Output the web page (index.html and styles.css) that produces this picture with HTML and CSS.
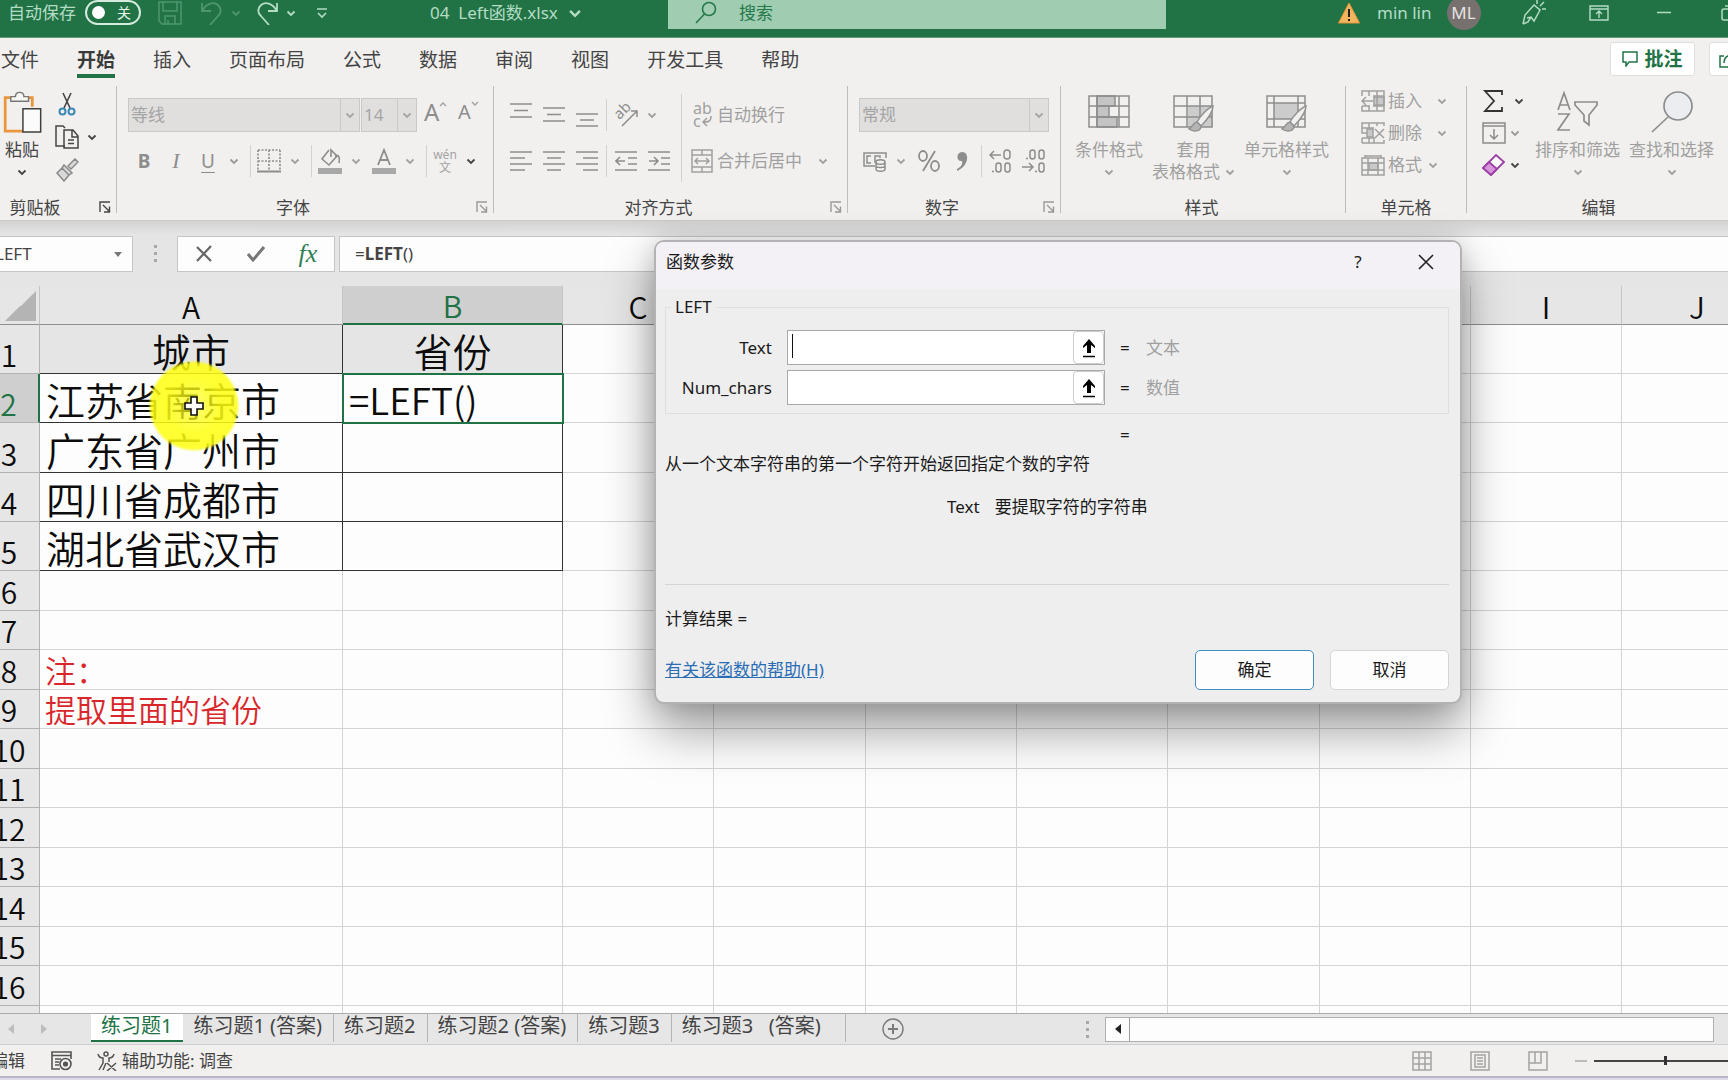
FILE: index.html
```html
<!DOCTYPE html>
<html lang="zh-CN">
<head>
<meta charset="utf-8">
<meta name="viewport" content="width=device-width, initial-scale=1">
<title>04 Left函数.xlsx</title>
<link rel="stylesheet" href="styles.css">
</head>
<body>
<svg class="defs" aria-hidden="true">
  <symbol id="chev" viewBox="0 0 10 10"><path d="M1.5 3.5 5 7l3.5-3.5" fill="none" stroke="currentColor" stroke-width="1.8"/></symbol>
  <symbol id="launch" viewBox="0 0 12 12"><path d="M1 11V1h10M4 4l6 6M10.500 5.500v5.500H5" fill="none" stroke="currentColor" stroke-width="1.400"/></symbol>
  <symbol id="brush" viewBox="0 0 26 28"><path d="M25 1C20 3 12 11 9 17l4 4C18 16 25 7 25 1z" fill="#f1f0ee" stroke="#929292" stroke-width="1.500"/><path d="M9 17c-4 0-4 5-8 7 4 3 12 3 12-3z" fill="#b5b5b5" stroke="#929292" stroke-width="1.500"/></symbol>
</svg>
<div class="app">

  <header class="titlebar">
    <div class="title-left">
      <label class="autosave" for="autosave">自动保存</label>
      <span class="toggle"><input type="checkbox" id="autosave"><span>关</span></span>
      <button class="tb dim" aria-label="保存"><svg width="24" height="24" viewBox="0 0 24 24" fill="none" stroke="currentColor" stroke-width="1.500"><path d="M1 1h22v22H4l-3-3zM5 1v9h14V1M7 23v-8h10v8M10 23v-4"/></svg></button>
      <button class="tb dim" aria-label="撤消"><svg width="24" height="24" viewBox="0 0 24 24" fill="none" stroke="currentColor" stroke-width="1.800"><path d="M2 2v8h9M2 10C6 3 13 0 18 4c4 4 3 8 0 11l-8 9"/></svg></button>
      <button class="tb-chev dim" aria-label="撤消选项"><svg width="10" height="10"><use href="#chev"/></svg></button>
      <button class="tb" aria-label="恢复"><svg width="24" height="24" viewBox="0 0 24 24" fill="none" stroke="currentColor" stroke-width="1.800"><path d="M22 2v8h-9M22 10C18 3 11 0 6 4c-4 4-3 8 0 11l8 9"/></svg></button>
      <button class="tb-chev" aria-label="恢复选项"><svg width="10" height="10"><use href="#chev"/></svg></button>
      <button class="tb" aria-label="自定义快速访问工具栏"><svg width="12" height="12" viewBox="0 0 12 12" fill="none" stroke="currentColor" stroke-width="1.600"><path d="M1 2h10M2 6l4 4 4-4"/></svg></button>
      <h1 class="doc">04&nbsp; Left函数.xlsx</h1>
      <svg class="doc-chev" width="14" height="14"><use href="#chev"/></svg>
    </div>
    <div class="search">
      <svg width="22" height="24" viewBox="0 0 22 24" fill="none" stroke="#257a4b" stroke-width="1.600"><circle cx="14" cy="8" r="6.500"/><path d="M9.500 13 1 22"/></svg>
      <input type="search" placeholder="搜索" aria-label="搜索">
    </div>
    <div class="title-right">
      <svg width="22" height="22" viewBox="0 0 22 22"><path d="M11 1 21.500 21H.5z" fill="#f2b45c" stroke="#e8963a"/><path d="M11 7v8M11 17v2" stroke="#222" stroke-width="2"/></svg>
      <span class="user">min lin</span>
      <span class="avatar">ML</span>
      <button class="tb" aria-label="即将推出"><svg width="24" height="26" viewBox="0 0 24 26" fill="none" stroke="currentColor" stroke-width="1.500"><path d="M1 24 3 15 12 5l6 5-6 11-3-4-4 1M1 24l5-2 3-5M15 4V0M18 6l4-4M20 9h4"/></svg></button>
      <button class="tb" aria-label="功能区显示选项"><svg width="20" height="16" viewBox="0 0 20 16" fill="none" stroke="currentColor" stroke-width="1.400"><path d="M1 1h18v14H1zM1 4h18M10 13V6M7 9l3-3 3 3"/></svg></button>
      <button class="tb" aria-label="最小化"><svg width="14" height="14" viewBox="0 0 14 14"><path d="M0 6.500h14" stroke="currentColor" stroke-width="1.500"/></svg></button>
      <button class="tb" aria-label="还原"><svg width="16" height="16" viewBox="0 0 16 16" fill="none" stroke="currentColor" stroke-width="1.500"><rect x="1" y="4" width="11" height="11" rx="2"/><path d="M4 1h8a3 3 0 0 1 3 3v8"/></svg></button>
    </div>
  </header>

  <nav class="tabs">
    <div class="tablist">
      <button>文件</button><button class="on">开始</button><button>插入</button><button>页面布局</button><button>公式</button><button>数据</button><button>审阅</button><button>视图</button><button>开发工具</button><button>帮助</button>
    </div>
    <div class="tab-actions">
      <button class="pill"><svg width="16" height="16" viewBox="0 0 16 16" fill="none" stroke="currentColor" stroke-width="1.500"><path d="M1 1h14v10H7l-3 4v-4H1z"/></svg>批注</button>
      <button class="pill share" aria-label="共享"><svg width="18" height="18" viewBox="0 0 18 18" fill="none" stroke="currentColor" stroke-width="1.500"><path d="M5 6H1v11h14v-5M5 13c0-5 3-8 9-8M11 1l5 4-5 4"/></svg></button>
    </div>
  </nav>

  <section class="ribbon">
    <div class="group g-clip">
      <div class="body">
        <button class="big paste">
          <svg width="42" height="45" viewBox="0 0 42 45" fill="none"><path d="M9 7H3v36h19M27 7h5v10" stroke="#e9963c" stroke-width="3"/><path d="M9 11V6h5c0-6 9-6 9 0h5v5z" fill="#f7f7f6" stroke="#777" stroke-width="1.500"/><path d="M22 19h19v25H22z" fill="#fbfbfb" stroke="#3f3f3f" stroke-width="1.600"/></svg>
          <span>粘贴</span><svg class="c" width="10" height="10"><use href="#chev"/></svg>
        </button>
        <div class="stack3">
          <button aria-label="剪切"><svg width="24" height="24" viewBox="0 0 24 24" fill="none"><path d="M8 1l7 15M16 1 9 16" stroke="#444" stroke-width="1.600"/><circle cx="7.500" cy="19.500" r="3" stroke="#3b87b8" stroke-width="2"/><circle cx="16.500" cy="19.500" r="3" stroke="#3b87b8" stroke-width="2"/></svg></button>
          <button aria-label="复制"><svg width="24" height="24" viewBox="0 0 24 24" fill="none" stroke="#444" stroke-width="1.500"><path d="M10 21H1V1h7l2 2"/><path d="M9 5h9l5 6v12H9zM17 5v7h6M13 15h6M13 18.500h6"/></svg><svg class="c" width="10" height="10"><use href="#chev"/></svg></button>
          <button aria-label="格式刷"><svg width="24" height="24" viewBox="0 0 24 24" fill="#d9d9d9" stroke="#8a8a8a" stroke-width="1.500"><path d="M13 8l7-7 3 3-7 7zM9 7l8 8-3 2-7-7zM7 10l7 7-5 6-7-8z"/></svg></button>
        </div>
      </div>
      <footer>剪贴板<button class="launch" aria-label="剪贴板设置"><svg width="12" height="12"><use href="#launch"/></svg></button></footer>
    </div>

    <div class="group g-font">
      <div class="body rows">
        <div class="row">
          <div class="combo wide"><select disabled aria-label="字体"><option>等线</option></select><svg width="10" height="10"><use href="#chev"/></svg></div>
          <div class="combo size"><select disabled aria-label="字号"><option>14</option></select><svg width="10" height="10"><use href="#chev"/></svg></div>
          <button class="grow" disabled aria-label="增大字号"><b class="a-big">A</b><svg width="8" height="8" viewBox="0 0 8 8"><path d="m1 6 3-3 3 3" fill="none" stroke="currentColor" stroke-width="1.400"/></svg></button>
          <button class="grow" disabled aria-label="减小字号"><b class="a-small">A</b><svg width="8" height="8" viewBox="0 0 8 8"><path d="m1 2 3 3 3-3" fill="none" stroke="currentColor" stroke-width="1.400"/></svg></button>
        </div>
        <div class="row">
          <button class="ltr bold" disabled>B</button><button class="ltr ital" disabled>I</button><button class="ltr under" disabled>U</button><svg class="cv off" width="10" height="10"><use href="#chev"/></svg>
          <i class="sep"></i>
          <button class="split" disabled aria-label="边框"><svg width="24" height="24" viewBox="0 0 24 24" fill="none" stroke="currentColor" stroke-width="1.600"><path d="M1 1h22M1 12h22M1 1v21M12 1v21M23 1v21" stroke-dasharray="2 1.500"/><path d="M0 22.500h24" stroke-width="2"/></svg><svg class="cv" width="10" height="10"><use href="#chev"/></svg></button>
          <i class="sep"></i>
          <button class="split" disabled aria-label="填充颜色"><svg width="24" height="26" viewBox="0 0 24 26" fill="none" stroke="#8d8d8d" stroke-width="1.600"><path d="M11 2 4 11l7 6 8-9-6-6v7M17 8c4-2 5 2 4 7"/><path d="M0 23h24" stroke="#a8a8a8" stroke-width="6"/></svg><svg class="cv" width="10" height="10"><use href="#chev"/></svg></button>
          <button class="split fontcolor" disabled aria-label="字体颜色"><svg width="24" height="26" viewBox="0 0 24 26" fill="none" stroke="#8d8d8d" stroke-width="1.800"><path d="m6 17 6-15 6 15M8.500 12h7"/><path d="M0 23h24" stroke="#a8a8a8" stroke-width="6"/></svg><svg class="cv" width="10" height="10"><use href="#chev"/></svg></button>
          <i class="sep"></i>
          <button class="split" aria-label="拼音"><span class="wen"><span>wén</span><span>文</span></span><svg class="cv" width="10" height="10"><use href="#chev"/></svg></button>
        </div>
      </div>
      <footer>字体<button class="launch off" aria-label="字体设置"><svg width="12" height="12"><use href="#launch"/></svg></button></footer>
    </div>

    <div class="group g-align">
      <div class="body">
        <div class="rows">
          <div class="row">
            <div class="trio">
              <button disabled aria-label="顶端对齐"><svg width="22" height="24" viewBox="0 0 22 24"><path d="M0 1h22M4 7.500h14M0 14h22" stroke="currentColor" stroke-width="1.600"/></svg></button>
              <button disabled aria-label="垂直居中"><svg width="22" height="24" viewBox="0 0 22 24"><path d="M0 5h22M4 11.500h14M0 18h22" stroke="currentColor" stroke-width="1.600"/></svg></button>
              <button disabled aria-label="底端对齐"><svg width="22" height="24" viewBox="0 0 22 24"><path d="M0 11h22M4 17h14M0 23h22" stroke="currentColor" stroke-width="1.600"/></svg></button>
            </div>
            <i class="sep"></i>
            <button class="split" disabled aria-label="方向"><svg width="24" height="24" viewBox="0 0 24 24" fill="none" stroke="currentColor" stroke-width="1.500"><path d="M7 23 22 8M16 8h6v6"/><text x="-1" y="12" transform="rotate(-45 8 8)" font-size="15" font-family="Noto Sans" fill="currentColor" stroke="none">ab</text></svg><svg class="cv" width="10" height="10"><use href="#chev"/></svg></button>
          </div>
          <div class="row">
            <div class="trio">
              <button disabled aria-label="左对齐"><svg width="22" height="22" viewBox="0 0 22 22"><path d="M0 2h22M0 8h15M0 14h22M0 20h15" stroke="currentColor" stroke-width="1.600"/></svg></button>
              <button disabled aria-label="居中"><svg width="22" height="22" viewBox="0 0 22 22"><path d="M0 2h22M4 8h14M0 14h22M4 20h14" stroke="currentColor" stroke-width="1.600"/></svg></button>
              <button disabled aria-label="右对齐"><svg width="22" height="22" viewBox="0 0 22 22"><path d="M0 2h22M7 8h15M0 14h22M7 20h15" stroke="currentColor" stroke-width="1.600"/></svg></button>
            </div>
            <i class="sep"></i>
            <div class="trio">
              <button disabled aria-label="减少缩进"><svg width="22" height="22" viewBox="0 0 22 22" fill="none" stroke="currentColor" stroke-width="1.600"><path d="M0 2h22M13 8h9M13 14h9M0 20h22M1 11h9M5 7l-4 4 4 4"/></svg></button>
              <button disabled aria-label="增加缩进"><svg width="22" height="22" viewBox="0 0 22 22" fill="none" stroke="currentColor" stroke-width="1.600"><path d="M0 2h22M13 8h9M13 14h9M0 20h22M1 11h9M6 7l4 4-4 4"/></svg></button>
            </div>
          </div>
        </div>
        <div class="rows wraps">
          <div class="row"><button class="txt" disabled><svg width="22" height="26" viewBox="0 0 22 26" fill="none" stroke="currentColor" stroke-width="1.500"><text x="2" y="12" font-size="16" font-family="Noto Sans" fill="currentColor" stroke="none">ab</text><text x="2" y="25" font-size="16" font-family="Noto Sans" fill="currentColor" stroke="none">c</text><path d="M20 14c0 6-3 6-8 6M16 16l-4 4 4 4"/></svg>自动换行</button></div>
          <div class="row"><button class="txt" disabled><svg width="22" height="24" viewBox="0 0 22 24" fill="none" stroke="currentColor" stroke-width="1.500"><path d="M1 1h20v22H1zM1 6h20M1 18h20M11 1v5M11 18v5M4 12h14M7 9l-3 3 3 3M15 9l3 3-3 3"/></svg>合并后居中<svg class="cv" width="10" height="10"><use href="#chev"/></svg></button></div>
        </div>
      </div>
      <footer>对齐方式<button class="launch off" aria-label="对齐设置"><svg width="12" height="12"><use href="#launch"/></svg></button></footer>
    </div>

    <div class="group g-num">
      <div class="body rows">
        <div class="row"><div class="combo num"><select disabled aria-label="数字格式"><option>常规</option></select><svg width="10" height="10"><use href="#chev"/></svg></div></div>
        <div class="row">
          <button class="split cur" disabled aria-label="会计数字格式"><svg width="24" height="24" viewBox="0 0 24 24" fill="none" stroke="currentColor" stroke-width="1.500"><path d="M12 17H1V4h22v5M8 7H4v7h4M12 14V7h5v2"/><path d="M13 13v7c0 3 9 3 9 0v-7M13 13c0 3 9 3 9 0s-9-3-9 0M13 17c0 2 9 2 9 0"/></svg><svg class="cv" width="10" height="10"><use href="#chev"/></svg></button>
          <div class="pair">
            <button disabled aria-label="百分比"><svg width="24" height="24" viewBox="0 0 24 24" fill="none" stroke="currentColor" stroke-width="1.800"><ellipse cx="6" cy="7" rx="4" ry="5"/><ellipse cx="18" cy="17" rx="4" ry="5"/><path d="M18 2 6 22"/></svg></button>
            <button disabled aria-label="千位分隔"><svg width="24" height="24" viewBox="0 0 24 24"><path d="M7 20c4-2 6-5 5-8-6 1-6-9 0-9 8 0 7 14-5 19z" fill="currentColor"/></svg></button>
          </div>
          <i class="sep"></i>
          <div class="pair">
            <button disabled aria-label="增加小数位"><svg width="24" height="24" viewBox="0 0 24 24" fill="none" stroke="currentColor" stroke-width="1.500"><path d="M1 6h11M5 2 1 6l4 4"/><rect x="15" y="1" width="6" height="9" rx="3"/><rect x="7" y="14" width="5" height="9" rx="2.500"/><rect x="16" y="14" width="5" height="9" rx="2.500"/><path d="M3 22.500h2"/></svg></button>
            <button disabled aria-label="减少小数位"><svg width="24" height="24" viewBox="0 0 24 24" fill="none" stroke="currentColor" stroke-width="1.500"><path d="M0 18h11M7 14l4 4-4 4M13 22.500h2"/><rect x="17" y="14" width="5" height="9" rx="2.500"/><rect x="8" y="1" width="5" height="9" rx="2.500"/><rect x="17" y="1" width="5" height="9" rx="2.500"/><path d="M4 9.500h2"/></svg></button>
          </div>
        </div>
      </div>
      <footer>数字<button class="launch off" aria-label="数字设置"><svg width="12" height="12"><use href="#launch"/></svg></button></footer>
    </div>

    <div class="group g-style">
      <div class="body">
        <button class="big" disabled><svg width="42" height="42" viewBox="0 0 42 42" fill="none" stroke="currentColor" stroke-width="1.500"><path d="M9 5h18v10H9zM9 15h12v11H9zM9 26h20v10H9z" fill="#c4c4c4"/><path d="M1 5h40v31H1zM1 15h40M1 26h40M9 5v31M31 5v31"/></svg><span>条件格式</span><svg class="c" width="10" height="10"><use href="#chev"/></svg></button>
        <button class="big" disabled><svg width="42" height="42" viewBox="0 0 42 42" fill="none" stroke="currentColor" stroke-width="1.500"><path d="M15 15h25v21H15z" fill="#ccc" stroke="none"/><path d="M1 5h38v31H1zM1 15h38M1 26h38M14 5v31M27 5v31"/><use href="#brush" x="14" y="14" width="28" height="28"/></svg><span>套用</span><span class="two">表格格式<svg width="10" height="10"><use href="#chev"/></svg></span></button>
        <button class="big" disabled><svg width="42" height="42" viewBox="0 0 42 42" fill="none" stroke="currentColor" stroke-width="1.500"><path d="M8 12h24v16H8z" fill="#ccc" stroke="none"/><path d="M1 5h38v31H1zM1 12h38M1 28h38M8 5v31M32 5v31"/><use href="#brush" x="14" y="14" width="28" height="28"/></svg><span>单元格样式</span><svg class="c" width="10" height="10"><use href="#chev"/></svg></button>
      </div>
      <footer>样式</footer>
    </div>

    <div class="group g-cell">
      <div class="body stack3">
        <button disabled><svg width="24" height="22" viewBox="0 0 24 22" fill="none" stroke="currentColor" stroke-width="1.500"><path d="M13 7h10v8H13z" fill="#c8c8c8"/><path d="M1 6V1h22v20H1v-5M8 1v5M16 1v20M8 16v5M1 11h11M5 7l-4 4 4 4M12 6h11M12 16h11M1 16h8"/></svg>插入<svg class="c" width="10" height="10"><use href="#chev"/></svg></button>
        <button disabled><svg width="24" height="22" viewBox="0 0 24 22" fill="none" stroke="currentColor" stroke-width="1.500"><path d="M6 7h6v8H6z" fill="#c8c8c8"/><path d="M23 4V1H1v5h12M1 6v5h5M1 16h12v5M1 21v-5M1 21h22v-3M8 1v5M16 1v3M8 16v5M14 7l9 9M23 7l-9 9"/></svg>删除<svg class="c" width="10" height="10"><use href="#chev"/></svg></button>
        <button class="near" disabled><svg width="24" height="22" viewBox="0 0 24 22" fill="none" stroke="currentColor" stroke-width="1.500"><path d="M8 9h9v7H8z" fill="#c8c8c8"/><path d="M1 4h22v17H1zM1 9h22M1 16h22M7 4v17M17 4v17M4 1v3M20 1v3M4 2h16" /></svg>格式<svg class="c" width="10" height="10"><use href="#chev"/></svg></button>
      </div>
      <footer>单元格</footer>
    </div>

    <div class="group g-edit">
      <div class="body">
        <div class="stack3">
          <button class="sum" aria-label="自动求和"><svg width="24" height="22" viewBox="0 0 24 22" fill="none" stroke="#333" stroke-width="1.800"><path d="M20 5V1H3l9 10-9 10h17v-4"/></svg><svg class="c" width="10" height="10"><use href="#chev"/></svg></button>
          <button aria-label="填充"><svg width="24" height="22" viewBox="0 0 24 22" fill="none" stroke="#8a8a8a" stroke-width="1.500"><path d="M1 1h22v20H1zM1 4h22M12 7v10M8 13l4 4 4-4"/></svg><svg class="c off" width="10" height="10"><use href="#chev"/></svg></button>
          <button aria-label="清除"><svg width="24" height="22" viewBox="0 0 24 22" fill="#fafafa" stroke="#9b3fa5" stroke-width="1.800"><path d="M14 1l8 7L9 21l-8-7z"/><path d="M7 8l8 7-6 6-8-7z" fill="#d795dc"/></svg><svg class="c" width="10" height="10"><use href="#chev"/></svg></button>
        </div>
        <button class="big" disabled><svg width="44" height="42" viewBox="0 0 44 42" fill="none" stroke="currentColor" stroke-width="1.700"><path d="M2 19 8 2l6 17M4 14h8M2 23h11L2 39h12M19 11h22v3l-8 10v10l-5-4v-6l-9-10z"/></svg><span>排序和筛选</span><svg class="c" width="10" height="10"><use href="#chev"/></svg></button>
        <button class="big" disabled><svg width="44" height="42" viewBox="0 0 44 42" fill="#ecedf0" stroke="currentColor" stroke-width="1.700"><circle cx="28" cy="15" r="14"/><path d="M18 26 2 41"/></svg><span>查找和选择</span><svg class="c" width="10" height="10"><use href="#chev"/></svg></button>
      </div>
      <footer>编辑</footer>
    </div>
  </section>

  <section class="formula">
    <div class="namebox"><input type="text" value="LEFT" aria-label="名称框"><span class="tri"></span></div>
    <span class="dots"><i></i><i></i><i></i></span>
    <div class="fbuttons">
      <button aria-label="取消输入"><svg width="18" height="18" viewBox="0 0 18 18"><path d="M2 2l14 14M16 1 2 16" stroke="#666" stroke-width="2.200"/></svg></button>
      <button aria-label="确认输入"><svg width="18" height="18" viewBox="0 0 18 18"><path d="m1 9 5 6L17 2" fill="none" stroke="#777" stroke-width="3"/></svg></button>
      <button class="fx" aria-label="插入函数">fx</button>
    </div>
    <div class="finput" role="textbox" contenteditable="true" aria-label="编辑栏">=<b>LEFT</b>()</div>
  </section>

  <main class="sheet">
    <table class="grid">
      <colgroup><col class="cr"><col class="ca"><col class="cb"><col class="c1"><col class="c2"><col class="c1"><col class="c1"><col class="c2"><col class="c1"><col class="c1"><col class="c1"></colgroup>
      <thead><tr><th><span class="corner"></span></th><th>A</th><th class="sel">B</th><th>C</th><th>D</th><th>E</th><th>F</th><th>G</th><th>H</th><th>I</th><th>J</th></tr></thead>
      <tbody>
        <tr class="data"><th>1</th><td class="head">城市</td><td class="head">省份</td><td></td><td></td><td></td><td></td><td></td><td></td><td></td><td></td></tr>
        <tr class="data active"><th>2</th><td>江苏省南京市</td><td><span class="edit">=LEFT()</span></td><td></td><td></td><td></td><td></td><td></td><td></td><td></td><td></td></tr>
        <tr class="data"><th>3</th><td>广东省广州市</td><td></td><td></td><td></td><td></td><td></td><td></td><td></td><td></td><td></td></tr>
        <tr class="data"><th>4</th><td>四川省成都市</td><td></td><td></td><td></td><td></td><td></td><td></td><td></td><td></td><td></td></tr>
        <tr class="data"><th>5</th><td>湖北省武汉市</td><td></td><td></td><td></td><td></td><td></td><td></td><td></td><td></td><td></td></tr>
        <tr><th>6</th><td></td><td></td><td></td><td></td><td></td><td></td><td></td><td></td><td></td><td></td></tr>
        <tr><th>7</th><td></td><td></td><td></td><td></td><td></td><td></td><td></td><td></td><td></td><td></td></tr>
        <tr><th>8</th><td class="note">注：</td><td></td><td></td><td></td><td></td><td></td><td></td><td></td><td></td><td></td></tr>
        <tr><th>9</th><td class="note">提取里面的省份</td><td></td><td></td><td></td><td></td><td></td><td></td><td></td><td></td><td></td></tr>
        <tr><th>10</th><td></td><td></td><td></td><td></td><td></td><td></td><td></td><td></td><td></td><td></td></tr>
        <tr><th>11</th><td></td><td></td><td></td><td></td><td></td><td></td><td></td><td></td><td></td><td></td></tr>
        <tr><th>12</th><td></td><td></td><td></td><td></td><td></td><td></td><td></td><td></td><td></td><td></td></tr>
        <tr><th>13</th><td></td><td></td><td></td><td></td><td></td><td></td><td></td><td></td><td></td><td></td></tr>
        <tr><th>14</th><td></td><td></td><td></td><td></td><td></td><td></td><td></td><td></td><td></td><td></td></tr>
        <tr><th>15</th><td></td><td></td><td></td><td></td><td></td><td></td><td></td><td></td><td></td><td></td></tr>
        <tr><th>16</th><td></td><td></td><td></td><td></td><td></td><td></td><td></td><td></td><td></td><td></td></tr>
        <tr><th></th><td></td><td></td><td></td><td></td><td></td><td></td><td></td><td></td><td></td><td></td></tr>
      </tbody>
    </table>
  </main>

  <div class="sheetbar">
    <div class="sheetnav"><button aria-label="上一张"><span class="arr l"></span></button><button aria-label="下一张"><span class="arr r"></span></button></div>
    <div class="sheettabs">
      <button class="on">练习题1</button><button>练习题1 (答案)</button><button>练习题2</button><button>练习题2 (答案)</button><button>练习题3</button><button class="last">练习题3&nbsp;&nbsp; (答案)</button>
    </div>
    <button class="add" aria-label="新工作表"><svg width="22" height="22" viewBox="0 0 22 22" fill="none" stroke="#7a7a7a" stroke-width="1.400"><circle cx="11" cy="11" r="10"/><path d="M11 6v10M6 11h10" stroke-width="2"/></svg></button>
    <span class="dots"><i></i><i></i><i></i></span>
    <div class="hscroll"><button aria-label="向左滚动"><span class="arr l dark"></span></button></div>
  </div>

  <footer class="status">
    <span class="mode">编辑</span>
    <button class="rec" aria-label="录制宏"><svg width="22" height="20" viewBox="0 0 22 20" fill="none" stroke="#555" stroke-width="1.600"><path d="M9 18H1V1h19v7M1 4.500h19M4 8h6M4 11h4M4 14h4"/><circle cx="14.500" cy="13" r="5.500"/><circle cx="14.500" cy="13" r="1.800" fill="#555"/></svg></button>
    <button class="acc"><svg width="20" height="20" viewBox="0 0 20 20" fill="none" stroke="#555" stroke-width="1.500"><circle cx="9" cy="3" r="2"/><path d="M1 3c1 4 5 4 5 4v5l-4 7M17 3c-1 4-5 4-5 4v4M9 12l-3 7M10 12l9 8M19 12l-9 8"/></svg>辅助功能: 调查</button>
    <div class="views">
      <button aria-label="普通"><svg width="20" height="20" viewBox="0 0 20 20" fill="none" stroke="currentColor" stroke-width="1.500"><path d="M1 1h18v18H1zM1 7h18M1 13h18M7 1v18M13 1v18"/></svg></button>
      <button aria-label="页面布局"><svg width="20" height="20" viewBox="0 0 20 20" fill="none" stroke="currentColor" stroke-width="1.500"><path d="M1 1h18v18H1zM5 4h10v12H5zM7 7h6M7 10h6M7 13h6"/></svg></button>
      <button aria-label="分页预览"><svg width="20" height="20" viewBox="0 0 20 20" fill="none" stroke="currentColor" stroke-width="1.500"><path d="M1 1h18v18H1zM1 12h12V1M7 1v11"/></svg></button>
    </div>
    <button class="minus" aria-label="缩小"></button>
    <input class="zoom" type="range" min="0" max="100" value="50" aria-label="缩放">
  </footer>
  <div class="edge"></div>

  <div class="pointer" aria-hidden="true"><svg width="20" height="20" viewBox="0 0 20 20"><path d="M7 1h6v6h6v6h-6v6H7v-6H1V7h6z" fill="#fff" stroke="#111" stroke-width="1.600"/></svg></div>

  <form class="dialog" role="dialog" aria-labelledby="dlg">
    <div class="dlg-title"><h2 id="dlg">函数参数</h2><button type="button">?</button><button type="button" aria-label="关闭"><svg width="16" height="16" viewBox="0 0 16 16"><path d="M1 1l14 14M15 1 1 15" stroke="#222" stroke-width="1.600"/></svg></button></div>
    <div class="dlg-body">
      <fieldset>
        <legend>LEFT</legend>
        <div class="arg"><label for="a1">Text</label><div class="field"><i class="caret"></i><input id="a1" type="text"><button type="button" aria-label="折叠"><svg width="14" height="20" viewBox="0 0 14 20"><path d="M7 1 13 8v2L9 7v8H5V7l-4 3V8z" fill="#000"/><path d="M1 18.500h12" stroke="#000" stroke-width="1.500"/></svg></button></div><span>=</span><output>文本</output></div>
        <div class="arg"><label for="a2">Num_chars</label><div class="field"><input id="a2" type="text"><button type="button" aria-label="折叠"><svg width="14" height="20" viewBox="0 0 14 20"><path d="M7 1 13 8v2L9 7v8H5V7l-4 3V8z" fill="#000"/><path d="M1 18.500h12" stroke="#000" stroke-width="1.500"/></svg></button></div><span>=</span><output>数值</output></div>
      </fieldset>
      <div class="arg result"><span></span><span></span><span>=</span></div>
      <p class="desc">从一个文本字符串的第一个字符开始返回指定个数的字符</p>
      <p class="argdesc"><span>Text</span><span>要提取字符的字符串</span></p>
      <p class="calc">计算结果 =</p>
      <div class="dlg-foot"><a href="#help">有关该函数的帮助(H)</a><button type="submit" class="ok">确定</button><button type="button">取消</button></div>
    </div>
  </form>
</div>
</body>
</html>
```

FILE: styles.css
```css
* { box-sizing: border-box; }
html, body { margin: 0; height: 100%; }
body {
  font: 17px/20px "Noto Sans", "Noto Sans CJK SC", sans-serif;
  color: #444;
  overflow: hidden;
}
button, input, select, output { font: inherit; color: inherit; }
button { padding: 0; border: 0; background: none; display: flex; align-items: center; white-space: nowrap; }
input { min-width: 0; border: 0; background: none; outline: 0; }
h1, h2, p { margin: 0; font-size: inherit; font-weight: 400; }
svg { display: block; flex: none; }
.defs { position: absolute; width: 0; height: 0; }

.app {
  position: relative;
  display: flex;
  flex-direction: column;
  height: 100vh;
  overflow: hidden;
  background: #e5e5e5;
}

/* title bar */
.titlebar {
  flex: none;
  display: flex;
  height: 38px;
  padding-bottom: 12px;
  align-items: center;
  background: #217346;
  border-bottom: 1px solid #5f9d79;
  color: #b3dcc3;
  overflow: hidden;
}
.title-left { flex: none; display: flex; align-items: center; width: 668px; padding-left: 8px; }
.autosave { width: 77px; white-space: nowrap; }
.toggle {
  display: flex;
  align-items: center;
  justify-content: space-between;
  width: 56px;
  height: 25px;
  margin-right: 17px;
  padding: 0 8px 0 5px;
  border: 2px solid #d5ebdd;
  border-radius: 13px;
  font-size: 14px;
  color: #e6f5ec;
}
.toggle input { appearance: none; width: 13px; height: 13px; margin: 0; border-radius: 50%; background: #fff; }
.tb { flex: none; justify-content: center; width: 24px; }
.tb-chev { justify-content: center; width: 20px; margin: 0 9px 0 2px; }
.dim { color: #4f966f; }
.dim + .dim { margin-left: 18px; }
.dim + .tb-chev.dim { margin-left: 2px; }
.doc { margin-left: 96px; width: 136px; white-space: nowrap; }
.doc-chev { margin-left: 2px; }
.search {
  flex: 1;
  display: flex;
  align-items: center;
  gap: 22px;
  height: 32px;
  padding-left: 27px;
  background: #a0ccb2;
}
.search input { flex: 1; padding: 0; }
.search input::placeholder { color: #257a4b; opacity: 1; }
.title-right { flex: none; display: flex; align-items: center; width: 562px; padding-left: 172px; }
.user { margin: 0 15px 0 17px; white-space: nowrap; }
.avatar {
  flex: none;
  width: 34px;
  height: 34px;
  border-radius: 50%;
  background: #76706f;
  color: #e6e2e2;
  line-height: 34px;
  text-align: center;
}
.title-right .tb { margin-left: 41px; }

/* ribbon tabs */
.tabs { flex: none; display: flex; height: 44px; justify-content: space-between; background: #f1f0ee; overflow: hidden; }
.tablist { display: flex; gap: 38px; padding-left: 1px; font-size: 19px; }
.tablist button { align-items: flex-start; height: 40px; padding-top: 12px; line-height: 20px; border-bottom: 4px solid transparent; }
.tablist .on { font-weight: 700; border-color: #217346; color: #3a3a3a; }
.tab-actions { flex: none; display: flex; gap: 14px; width: 118px; padding-top: 4px; }
.pill {
  flex: none;
  gap: 6px;
  justify-content: center;
  width: 85px;
  height: 34px;
  border: 1px solid #e1dfdd;
  border-radius: 3px;
  background: #fff;
  color: #217346;
  font-size: 19px;
  font-weight: 700;
}
.share { justify-content: flex-start; padding-left: 9px; }

/* ribbon */
.ribbon {
  position: relative;
  flex: none;
  display: flex;
  height: 139px;
  padding: 4px 0 7px;
  background: #f1f0ee;
  border-bottom: 1px solid #c9c9c9;
  overflow: hidden;
}
.group { flex: none; display: flex; flex-direction: column; border-right: 1px solid #bdbdbd; }
.group .body { flex: 1; display: flex; }
.group footer { position: relative; height: 18px; padding-top: 4px; line-height: 18px; text-align: center; }
.launch { position: absolute; right: 5px; bottom: 0; }
.off { color: #999; }
.group button:disabled { color: #a0a0a0; }
.rows, .body.rows { display: flex; flex-direction: column; gap: 12px; padding-top: 12px; }
.row { display: flex; align-items: center; height: 34px; }
.cv { margin: 0 5px; }
.sep { width: 1px; height: 32px; margin: 0 6px; background: #d2d2d2; }
.split { gap: 4px; }
.split svg:first-child { color: #8d8d8d; }
.trio { display: flex; gap: 11px; }
.pair { display: flex; gap: 9px; }
.trio svg, .pair svg { color: #8d8d8d; }
.big { flex-direction: column; flex: none; }
.big > svg:first-child { height: 42px; margin: 5px 0 6px; }
.big > span { height: 22px; line-height: 22px; }
.big .c { margin-top: 6px; }
.big:disabled > svg:first-child { color: #8d8d8d; }
.stack3 { display: flex; flex-direction: column; gap: 9px; padding-top: 4px; }
.stack3 button { height: 24px; }

.g-clip { width: 117px; }
.g-clip footer { padding-right: 46px; }
.paste { width: 44px; }
.g-clip .stack3 { padding: 6px 0 0 11px; }
.g-clip .stack3 .c { margin-left: 8px; }

.g-font { width: 377px; }
.g-font .body { padding-left: 11px; }
.g-font footer { padding-right: 24px; }
.combo { display: flex; align-items: center; height: 34px; background: #e0dfde; border: 1px solid #c9c9c9; color: #a5a5a5; }
.combo select { flex: 1; min-width: 0; height: 32px; padding: 0 2px; appearance: none; border: 0; border-right: 1px solid #c9c9c9; background: none; color: #a5a5a5; opacity: 1; }
.combo svg { margin: 0 4px; }
.wide { width: 232px; margin-right: 1px; }
.size { width: 56px; margin-right: 7px; }
.num { width: 190px; }
.grow { align-items: flex-start; width: 34px; height: 30px; }
.grow b { font-weight: 400; line-height: 24px; color: #8d8d8d; }
.a-big { font-size: 24px; }
.a-small { font-size: 20px; }
.ltr { justify-content: center; width: 32px; font-size: 19px; }
.group .ltr:disabled { color: #8d8d8d; }
.bold { font-weight: 700; }
.ital { font-family: "Liberation Serif", serif; font-style: italic; font-size: 22px; }
.under { text-decoration: underline; text-underline-offset: 4px; }
.fontcolor { margin-left: 6px; }
.wen { display: flex; flex-direction: column; align-items: center; width: 24px; font-size: 12px; line-height: 13px; color: #a3a3a3; }

.g-align { width: 354px; }
.g-align .body { padding-left: 16px; }
.g-align .sep { margin: 0 8px; }
.g-align .rows { width: 171px; }
.g-align .split { gap: 3px; }
.g-align .wraps { width: auto; height: 88px; margin-top: 8px; padding: 4px 0 0 9px; border-left: 1px solid #d2d2d2; }
.g-align footer { padding-right: 24px; }
.txt { gap: 4px; }
.txt .cv { margin-left: 12px; }

.g-num { width: 213px; }
.g-num .body { padding-left: 11px; }
.g-num .sep { margin: 0 7px; }
.g-num footer { padding-right: 24px; }
.cur { margin: 0 6px 0 4px; }

.g-style { width: 285px; }
.g-style .body { gap: 9px; padding-left: 14px; }
.g-style footer { padding-right: 3px; }
.two { display: flex; align-items: center; gap: 5px; }

.g-cell { width: 121px; }
.g-cell .stack3 { padding: 3px 0 0 15px; gap: 8px; }
.g-cell button { gap: 3px; }
.g-cell .c { margin-left: 12px; }
.g-cell .near .c { margin-left: 3px; }

.g-edit { width: 265px; border: 0; padding-right: 2px; }
.g-edit .body { padding-left: 15px; }
.g-edit .stack3 { width: 53px; padding-top: 3px; gap: 8px; }
.g-edit .stack3 .c { margin-left: 4px; }
.g-edit .stack3 .sum .c { margin-left: 8px; }
.g-edit .big + .big { margin-left: 9px; }

/* formula bar */
.formula {
  flex: none;
  display: flex;
  height: 65px;
  padding: 15px 0;
  background: linear-gradient(#d2d2d2, #e5e5e5 14px);
}
.namebox, .fbuttons, .finput { height: 36px; border: 1px solid #c6c6c6; background: #fdfdfd; }
.namebox { display: flex; align-items: center; width: 134px; margin-left: -1px; padding-right: 10px; }
.namebox input { flex: 1; margin-left: -5px; padding: 0; }
.tri { border: 4px solid transparent; border-top: 5px solid #777; border-bottom: 0; }
.dots { display: flex; flex-direction: column; justify-content: center; gap: 4px; align-items: center; }
.dots i { width: 3px; height: 3px; background: #a8a8a8; }
.formula .dots { width: 44px; }
.fbuttons { display: flex; width: 158px; margin-right: 4px; }
.fbuttons button { flex: 1; justify-content: center; }
.fbuttons .fx { font: italic 400 26px "Liberation Serif", serif; color: #2f8055; }
.finput { flex: 1; padding: 7px 15px; border-right: 0; outline: 0; }

/* grid */
.sheet { flex: 1; min-height: 0; overflow: hidden; background: #fdfdfd; }
.grid {
  width: 1794px;
  margin-left: -21px;
  table-layout: fixed;
  border-collapse: separate;
  border-spacing: 0;
  font-family: "Noto Sans CJK SC", sans-serif;
  font-weight: 350;
  color: #0c0c0c;
}
.cr { width: 61px; }
.ca { width: 303px; }
.cb { width: 220px; }
.c1 { width: 151px; }
.c2 { width: 152px; }
.grid th, .grid td { padding: 0; border: 0 solid #d4d4d4; border-width: 0 1px 1px 0; white-space: nowrap; vertical-align: bottom; }
.grid th { font-size: 30px; line-height: 34px; font-weight: 350; background: #e6e6e6; border-color: #b2b2b2; }
.grid thead th { height: 39px; line-height: 36px; border-bottom-color: #8f8f8f; border-right-color: #c4c4c4; }
.grid thead .sel { background: #cfcfcf; color: #217346; border-bottom: 2px solid #217346; line-height: 35px; }
.corner { display: block; margin: 0 3px 3px 26px; border: 15px solid transparent; border-color: transparent #b4b4b4 #b4b4b4 transparent; }
.grid tbody th { height: 39px; padding-bottom: 2px; }
.grid tbody tr:nth-child(even) th { height: 40px; }
.grid tbody .data:nth-child(n) th { height: 49px; }
.grid tbody .data:nth-child(3) th { height: 50px; }
.grid .data td { font-size: 39px; line-height: 42px; padding-bottom: 2px; }
.grid .data td:nth-child(2), .grid .data td:nth-child(3) { padding-left: 6px; border-color: #333; }
.grid .data .head:nth-child(n) { padding-left: 0; background: #e5e5e5; text-align: center; }
.grid .active th { background: #cfcfcf; color: #217346; border-right: 2px solid #217346; }
.grid .active td:nth-child(3) { position: relative; border-color: #217346; outline: 2px solid #217346; outline-offset: -1px; }
.grid .data .edit { display: block; font-size: 37px; }
.grid .note { padding: 0 0 2px 5px; font-size: 31px; line-height: 34px; color: #d9262b; }

/* sheet tabs */
.sheetbar {
  flex: none;
  display: flex;
  align-items: center;
  height: 32px;
  border-top: 1px solid #ababab;
  border-bottom: 1px solid #cfcfcf;
  background: #e6e6e6;
}
.sheetnav { display: flex; gap: 27px; width: 91px; padding-left: 8px; }
.arr { border: 5px solid transparent; }
.arr.l { border-right: 6px solid #bdbdbd; border-left: 0; }
.arr.r { border-left: 6px solid #bdbdbd; border-right: 0; }
.arr.dark { border-right-color: #222; }
.sheettabs { display: flex; align-self: flex-start; font-size: 20px; }
.sheettabs button { height: 28px; padding: 0 11px 0 10px; line-height: 24px; align-items: flex-start; }
.sheettabs button + button { border-right: 1px solid #b5b5b5; }
.sheettabs .on { background: #fff; color: #217346; border-bottom: 2px solid #217346; }
.sheettabs .last { padding-right: 24px; }
.add { margin-left: 36px; }
.sheetbar .dots { width: 36px; margin-left: auto; }
.hscroll { width: 609px; height: 25px; margin-right: 14px; background: #fdfdfd; border: 1px solid #b0b0b0; display: flex; }
.hscroll button { width: 24px; justify-content: center; border-right: 1px solid #999; }

/* status bar */
.status { flex: none; display: flex; align-items: center; height: 31px; background: #f1f0ee; overflow: hidden; }
.mode { flex: none; margin-left: -9px; }
.rec { margin-left: 26px; }
.acc { gap: 5px; margin-left: 24px; }
.views { display: flex; gap: 38px; margin-left: auto; color: #a3a3a3; }
.minus { flex: none; width: 12px; height: 2px; margin: 0 7px 0 27px; background: #bbb; }
.zoom { flex: none; appearance: none; width: 142px; height: 9px; margin: 0 -8px 0 0; background: linear-gradient(#444, #444) center / 100% 2px no-repeat; }
.zoom::-webkit-slider-thumb { appearance: none; width: 3px; height: 9px; background: #333; }
.edge { flex: none; height: 4px; background: #dfdbea; border-top: 2px solid #b9b4c6; }

/* mouse pointer with click highlight */
.pointer {
  position: absolute;
  left: 148px;
  top: 360px;
  display: flex;
  align-items: center;
  justify-content: center;
  width: 92px;
  height: 92px;
  border-radius: 50%;
  background: radial-gradient(closest-side, rgba(255, 255, 16, .6) 0, rgba(255, 255, 16, .85) 60%, rgba(255, 255, 16, .85) 92%, rgba(255, 255, 16, 0) 100%);
}

/* function arguments dialog */
.dialog {
  position: absolute;
  left: 654px;
  top: 240px;
  width: 808px;
  border: 2px solid #b3b3b3;
  border-radius: 10px;
  overflow: hidden;
  background: #eee;
  color: #1a1a1a;
  box-shadow: 0 26px 50px rgba(0, 0, 0, .38), 0 0 24px rgba(0, 0, 0, .15);
}
.dlg-title { display: flex; height: 47px; padding-left: 10px; background: #f3f1f6; }
.dlg-title h2 { flex: 1; line-height: 40px; }
.dlg-title button { justify-content: center; width: 68px; height: 40px; }
.dlg-body { padding: 6px 11px 12px 9px; }
fieldset { margin: 0; padding: 11px 0 8px; border: 1px solid #dfdfdf; min-width: 0; }
legend { margin-left: 5px; padding: 0 4px; line-height: 24px; }
.arg { display: grid; grid-template-columns: 106px 318px 11px 1fr; column-gap: 15px; align-items: center; }
.arg + .arg { margin-top: 5px; }
.arg label { text-align: right; }
.arg output { color: #a0a0a0; }
.field { display: flex; height: 35px; border: 1px solid #a9a9a9; background: #fff; }
.field input { flex: 1; padding: 0 4px; }
.caret { width: 1px; height: 24px; margin: 3px 0 0 4px; background: #111; }
.field button { justify-content: center; width: 31px; border: 1px solid #ccc; border-radius: 4px; }
.result { height: 20px; margin-top: 11px; padding-left: 1px; }
.desc { margin-top: 9px; }
.argdesc { display: flex; gap: 15px; margin-top: 23px; padding-left: 282px; }
.calc { margin-top: 67px; padding-top: 24px; border-top: 1px solid #d5d5d5; }
.dlg-foot { display: flex; align-items: center; gap: 16px; margin-top: 21px; }
.dlg-foot a { margin-right: auto; color: #2a6db5; }
.dlg-foot button { justify-content: center; width: 119px; height: 40px; border: 1px solid #d5d5d5; border-radius: 5px; background: #fdfdfd; }
.dlg-foot .ok { border-color: #3f8fc0; }
```
